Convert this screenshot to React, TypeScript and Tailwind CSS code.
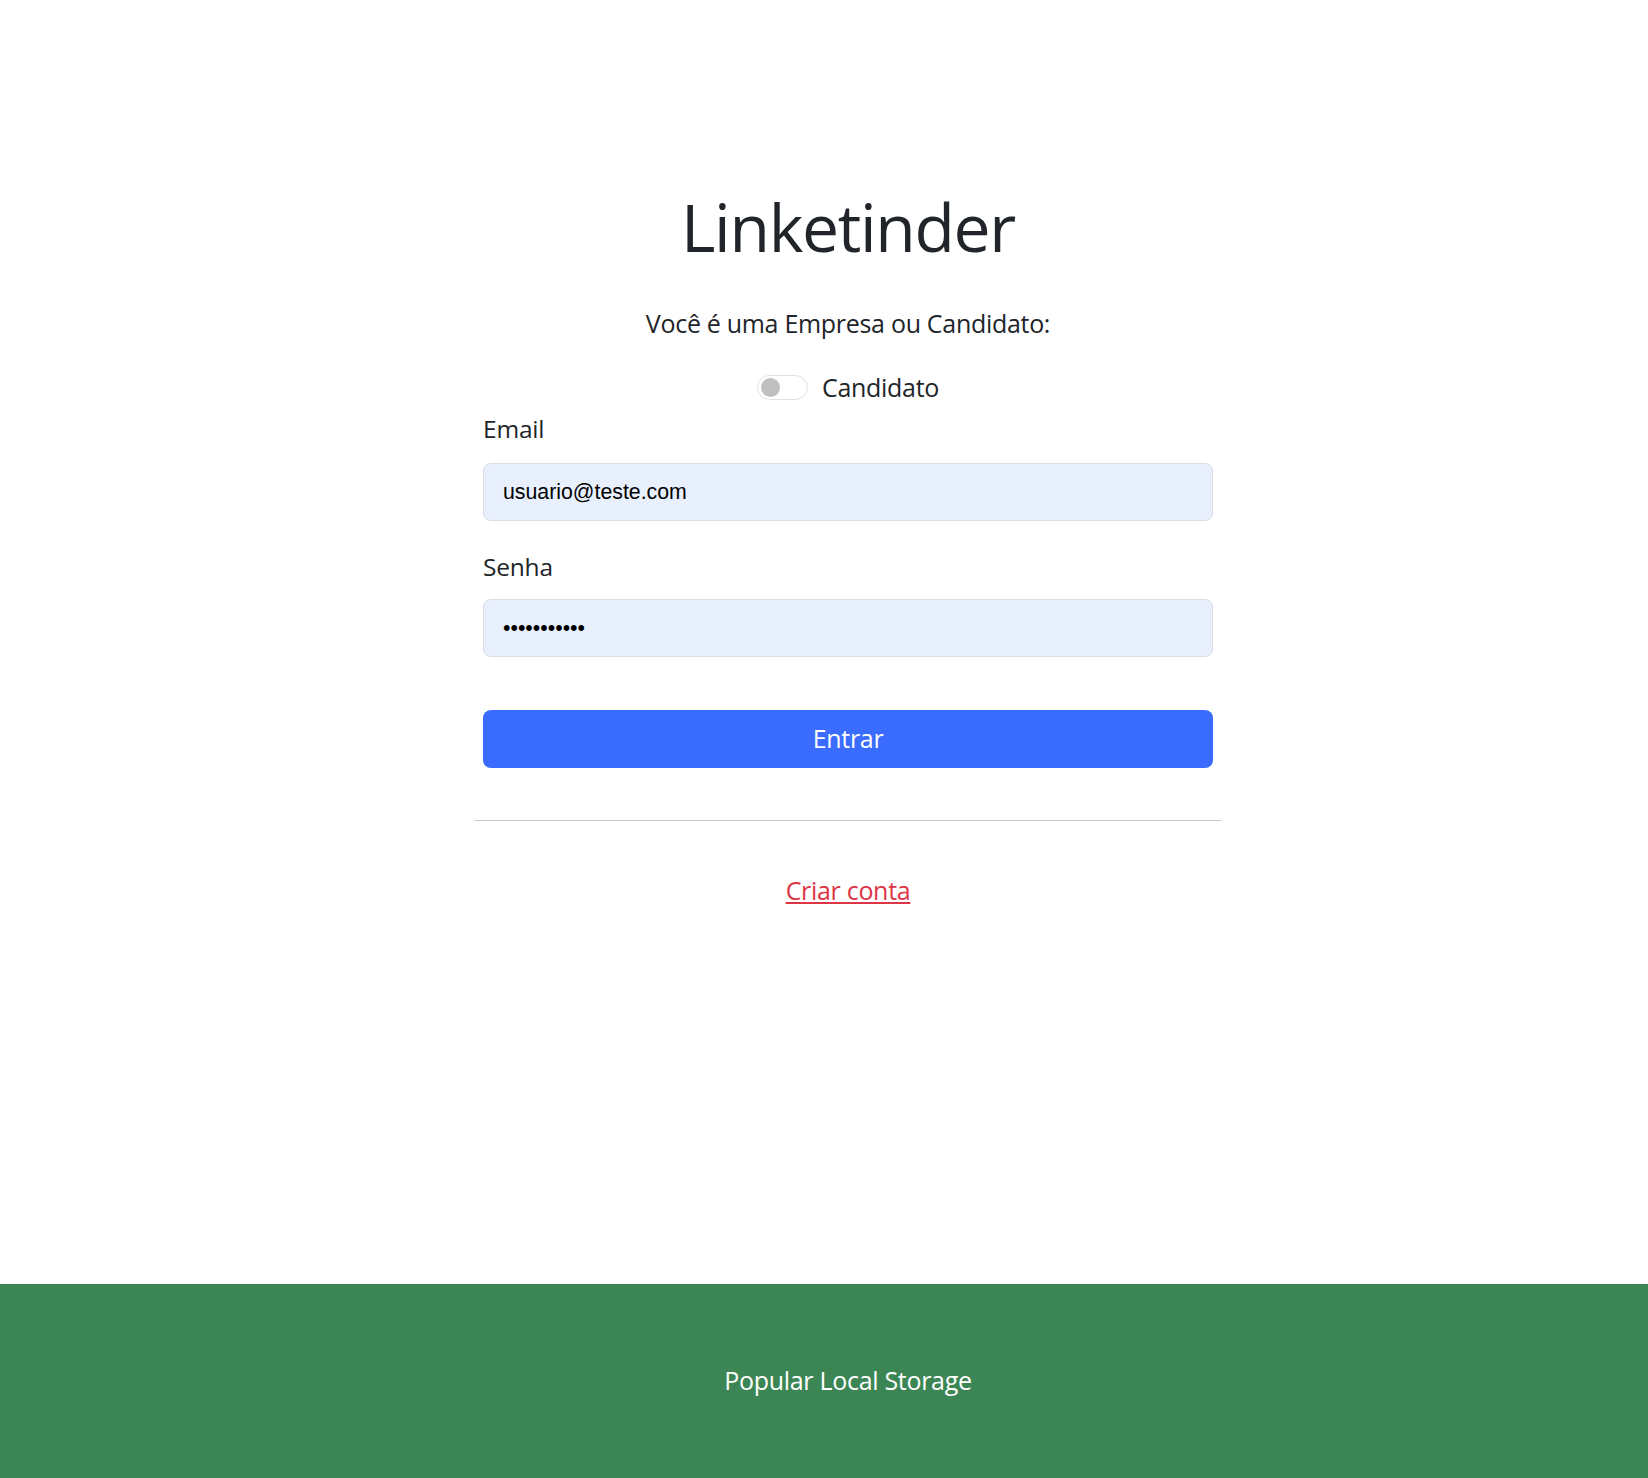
import React from "react";

export default function App() {
  return (
    <div className="min-h-screen flex flex-col bg-white text-[#212529] font-['Open_Sans',sans-serif]">
      <main className="flex-1 pl-12 pt-[185px]">
        <div className="mx-auto w-[748px]">
          <h1 className="text-center text-[66px] leading-[82px] font-normal tracking-[-1.3px]">Linketinder</h1>

          <p className="mt-[37px] text-center text-[25px] leading-[39px] tracking-[-0.3px]">Você é uma Empresa ou Candidato:</p>

          <div className="mt-[25px] flex items-center justify-center gap-[14px]">
            <span className="flex h-[25px] w-[51px] items-center rounded-full border border-[#dee2e6] bg-white px-[3px]">
              <span className="h-[19px] w-[19px] rounded-full bg-[#bfbfbf]" />
            </span>
            <span className="text-[25px] leading-[39px] tracking-[-0.3px]">Candidato</span>
          </div>

          <form className="mt-[6px] flex flex-col px-[9px]">
            <label className="text-[24.5px] leading-[32px] mb-[18px] tracking-[-0.2px]">Email</label>
            <input
              type="email"
              defaultValue="usuario@teste.com"
              className="h-[58px] w-full rounded-[8px] border border-[#d9dee4] bg-[#e8f0fe] px-[19px] text-[21.3px] text-black font-['Liberation_Sans',sans-serif] outline-none"
            />

            <label className="mt-[30px] text-[24.5px] leading-[32px] mb-[16px] tracking-[-0.2px]">Senha</label>
            <input
              type="password"
              defaultValue="12345678901"
              className="h-[58px] w-full rounded-[8px] border border-[#d9dee4] bg-[#e8f0fe] px-[19px] text-[21.3px] text-black font-['Liberation_Sans',sans-serif] outline-none"
            />

            <button
              type="button"
              className="mt-[53px] h-[58px] w-full rounded-[8px] bg-[#3a6cff] text-[25px] tracking-[-0.3px] text-white"
            >
              Entrar
            </button>
          </form>

          <hr className="mt-[52px] border-t border-[#c8c8c8]" />

          <p className="mt-[50px] text-center text-[25px] leading-[39px] tracking-[-0.3px]">
            <a href="#" className="text-[#dc3545] underline">Criar conta</a>
          </p>
        </div>
      </main>

      <footer className="h-[194px] flex items-center justify-center pl-12 bg-[#3c8655]">
        <span className="text-white text-[25px] tracking-[-0.3px]">Popular Local Storage</span>
      </footer>
    </div>
  );
}
